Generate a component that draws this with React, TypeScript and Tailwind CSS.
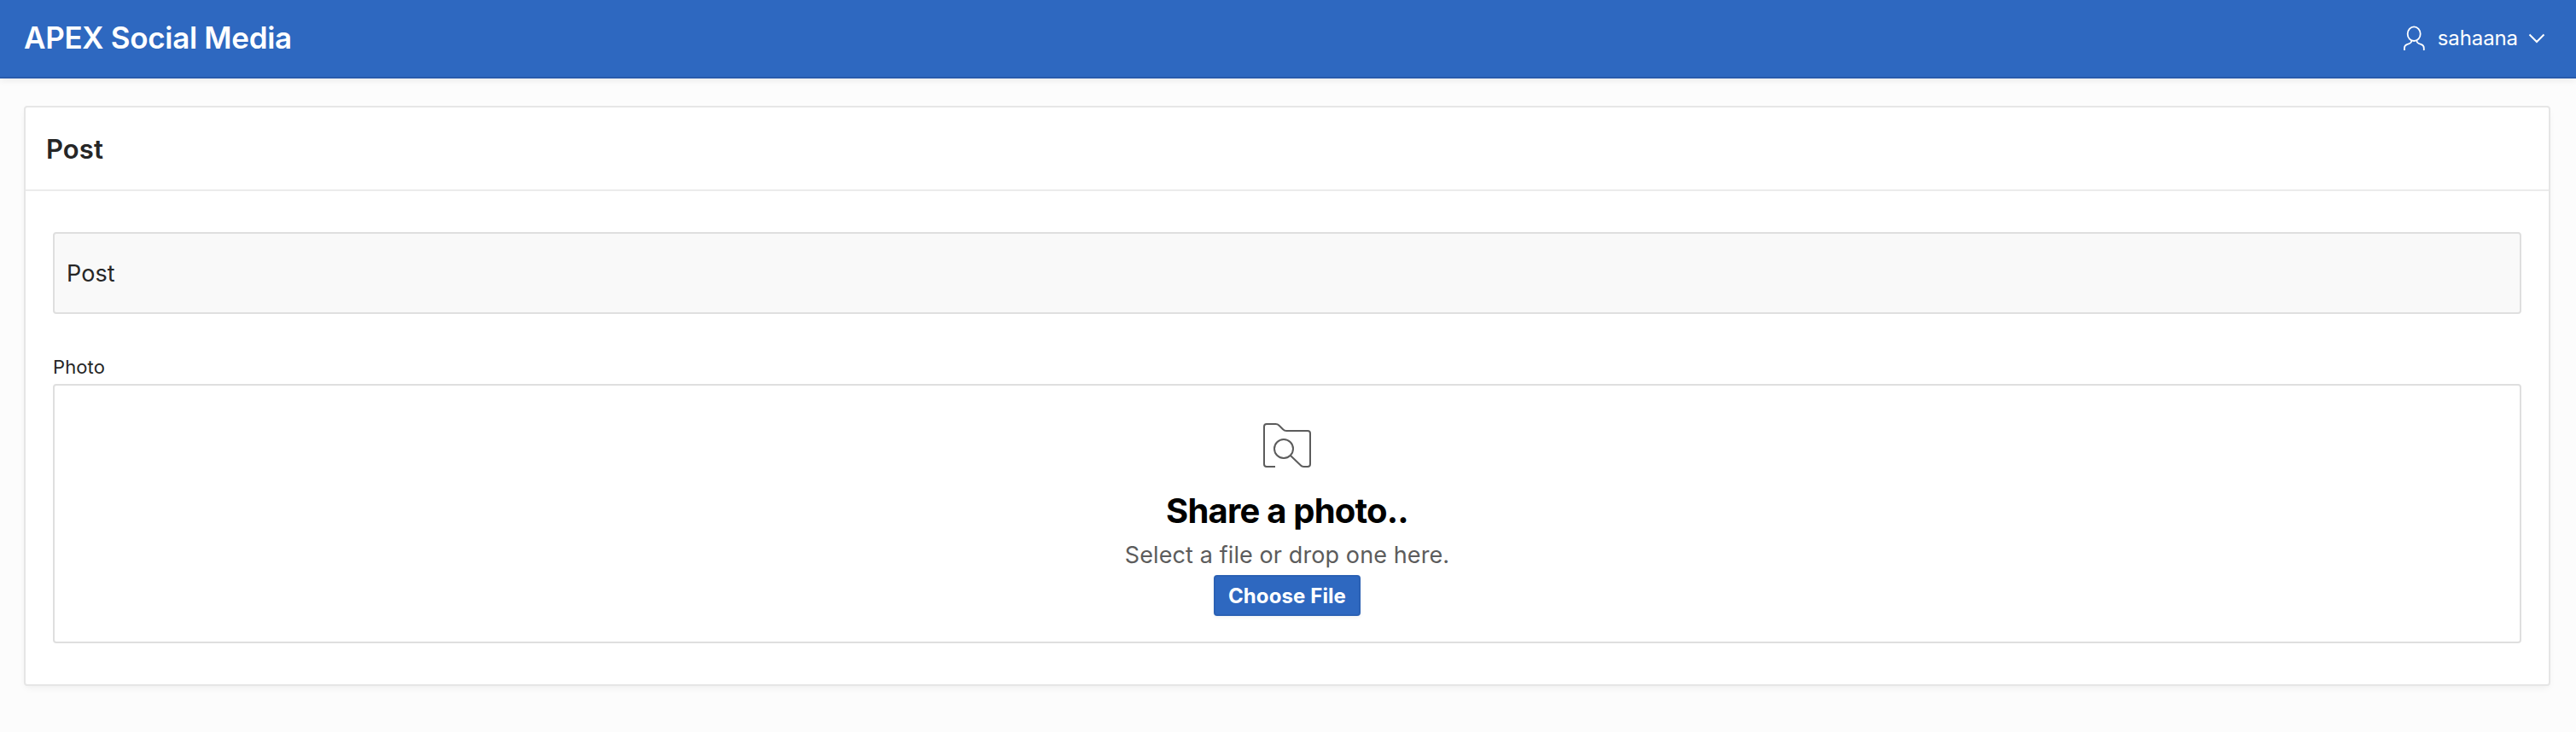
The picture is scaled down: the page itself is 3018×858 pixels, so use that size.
import React from "react";

function UserIcon() {
  return (
    <svg className="h-[32px] w-[28px] shrink-0" viewBox="0 0 28 32" fill="none" stroke="#fff" strokeWidth="1.8" strokeLinecap="butt">
      <ellipse cx="14.2" cy="10.700" rx="7.500" ry="8.300" />
      <path d="M3 30v-2.700c0-2 1.200-3.400 3-4.100l3-1.200c1.500-.6 2.300-1.500 2.500-3.400M25.800 30v-2.700c0-2-1.200-3.400-3-4.100l-3-1.200c-1.500-.6-2.300-1.500-2.500-3.400" />
    </svg>
  );
}

function ChevronIcon() {
  return (
    <svg className="h-[12px] w-[20px] shrink-0" viewBox="0 0 20 12" fill="none" stroke="#fff" strokeWidth="2" strokeLinecap="butt">
      <path d="M1.500 1.500L10 10l8.500-8.500" />
    </svg>
  );
}

function FolderSearchIcon() {
  return (
    <svg className="h-[52px] w-[56px] shrink-0" viewBox="0 0 56 52" fill="none" stroke="#5c5c5c" strokeWidth="2">
      <path d="M14 51H4a3 3 0 0 1-3-3V4a3 3 0 0 1 3-3h10.500c1.700 0 2.900.5 4.100 1.700l4.500 4.500c1.200 1.200 2.400 1.800 4.100 1.800H52a3 3 0 0 1 3 3v36a3 3 0 0 1-3 3h-4.200c-1.700 0-2.900-.6-4.100-1.800L32.200 38.200" />
      <circle cx="24" cy="30" r="11" />
    </svg>
  );
}

export default function App() {
  return (
    <div className="flex h-[858px] w-full flex-col bg-[#fcfcfc] font-['Inter','Liberation_Sans',sans-serif] text-[#262626]">
      <header className="flex h-[92px] shrink-0 items-center justify-between border-b-2 border-[#295bac] bg-[#2e68c0] pr-[36px] pl-[28px] text-white shadow-[0_2px_8px_rgba(0,0,0,0.08)]">
        <h1 className="pb-[2px] text-[35px] leading-[44px] font-semibold tracking-[-0.3px] whitespace-nowrap">APEX Social Media</h1>
        <button className="flex items-center whitespace-nowrap">
          <UserIcon />
          <span className="ml-[14px] text-[24px] leading-[32px] tracking-[-0.1px]">sahaana</span>
          <span className="ml-[12px]"><ChevronIcon /></span>
        </button>
      </header>

      <main className="pt-[32px] pr-[30px] pl-[28px]">
        <section className="h-[680px] rounded-[4px] border-2 border-[#e6e6e6] bg-white shadow-[0_4px_8px_-2px_rgba(0,0,0,0.06)]">
          <div className="flex h-[98px] items-center border-b-2 border-[#ebebeb] px-[24px]">
            <h2 className="pt-[2px] text-[31px] leading-[40px] font-semibold tracking-[0.1px]">Post</h2>
          </div>
          <div className="px-[32px] pt-[48px]">
            <div className="flex h-[96px] items-center rounded-[4px] border-2 border-[#dfdfdf] bg-[#f9f9f9] px-[14px]">
              <span className="pt-[2px] text-[27px] leading-[32px] tracking-[0.1px]">Post</span>
            </div>
            <label className="mt-[46px] block h-[36px] text-[22px] leading-[32px] tracking-[0.1px]">Photo</label>
            <div className="flex h-[304px] flex-col items-center rounded-[4px] border-2 border-[#dfdfdf] bg-white pt-[44px]">
              <FolderSearchIcon />
              <h3 className="mt-[27px] text-[40px] leading-[48px] font-bold tracking-[-0.8px] text-black">Share a photo..</h3>
              <p className="mt-[12px] text-[27px] leading-[32px] tracking-[0.1px] text-[#5c5c5c]">Select a file or drop one here.</p>
              <button className="mt-[7px] flex h-[48px] w-[172px] items-center justify-center rounded-[4px] border-2 border-[#2b61b4] bg-[#2e68c0] pt-px text-[24px] leading-[32px] font-bold tracking-[0.1px] whitespace-nowrap text-white shadow-[0_2px_4px_rgba(0,0,0,0.05)]">
                Choose File
              </button>
            </div>
          </div>
        </section>
      </main>
    </div>
  );
}
